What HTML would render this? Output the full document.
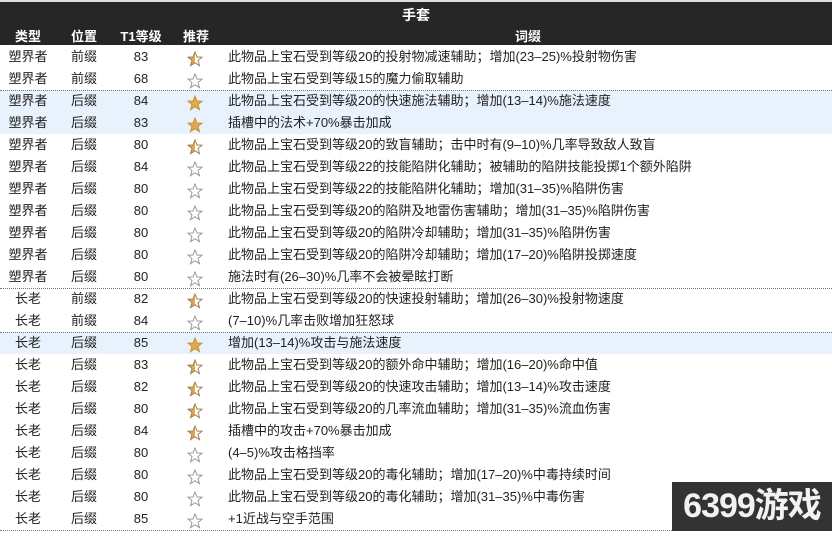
<!DOCTYPE html>
<html><head><meta charset="utf-8"><style>
*{margin:0;padding:0;box-sizing:border-box}
body{width:832px;height:531px;overflow:hidden;background:#fff;font-family:"Liberation Sans","Noto Sans CJK SC",sans-serif;font-size:13px;color:#222;position:relative}
.hd{position:absolute;left:0;top:2px;width:832px;height:43px;background:#262626;color:#fff;font-weight:bold}
.hd div{position:absolute;text-align:center}
.row{position:absolute;left:0;width:832px;height:22px;line-height:22px}
.row.b{background:#e8f2fc}
.row span{position:absolute;top:0}
.c1{left:0;width:56px;text-align:center}
.c2{left:56px;width:56px;text-align:center}
.c3{left:112px;width:58px;text-align:center}
.c4{left:187px;top:5px!important;width:16px;height:16px}
.c5{left:228px;white-space:nowrap}
.sep{position:absolute;left:0;width:832px;border-top:1px dotted #777}
.wm{position:absolute;left:672px;top:482px;width:160px;height:49px;background:#333;color:#f2f2f2;font-size:34px;font-weight:bold;line-height:49px;text-align:center;letter-spacing:-1px}
</style></head><body>
<div style="position:absolute;left:0;top:0;width:832px;height:2px;background:#ddd"></div>
<div class="hd">
<div style="left:0;width:832px;top:3px;font-size:14px">手套</div>
<div style="left:0;width:56px;top:24px">类型</div>
<div style="left:56px;width:56px;top:24px">位置</div>
<div style="left:112px;width:58px;top:24px">T1等级</div>
<div style="left:170px;width:52px;top:24px">推荐</div>
<div style="left:228px;width:600px;top:24px">词缀</div>
</div>
<svg width="0" height="0" style="position:absolute"><defs>
<linearGradient id="h"><stop offset="50%" stop-color="#e0a850"/><stop offset="50%" stop-color="#fff"/></linearGradient>
</defs></svg>
<div id="t"></div>
<div class="wm">6399游戏</div>
<script>
var R=[
["塑界者","前缀","83",1,"此物品上宝石受到等级20的投射物减速辅助；增加(23–25)%投射物伤害"],
["塑界者","前缀","68",0,"此物品上宝石受到等级15的魔力偷取辅助"],
["塑界者","后缀","84",2,"此物品上宝石受到等级20的快速施法辅助；增加(13–14)%施法速度"],
["塑界者","后缀","83",2,"插槽中的法术+70%暴击加成"],
["塑界者","后缀","80",1,"此物品上宝石受到等级20的致盲辅助；击中时有(9–10)%几率导致敌人致盲"],
["塑界者","后缀","84",0,"此物品上宝石受到等级22的技能陷阱化辅助；被辅助的陷阱技能投掷1个额外陷阱"],
["塑界者","后缀","80",0,"此物品上宝石受到等级22的技能陷阱化辅助；增加(31–35)%陷阱伤害"],
["塑界者","后缀","80",0,"此物品上宝石受到等级20的陷阱及地雷伤害辅助；增加(31–35)%陷阱伤害"],
["塑界者","后缀","80",0,"此物品上宝石受到等级20的陷阱冷却辅助；增加(31–35)%陷阱伤害"],
["塑界者","后缀","80",0,"此物品上宝石受到等级20的陷阱冷却辅助；增加(17–20)%陷阱投掷速度"],
["塑界者","后缀","80",0,"施法时有(26–30)%几率不会被晕眩打断"],
["长老","前缀","82",1,"此物品上宝石受到等级20的快速投射辅助；增加(26–30)%投射物速度"],
["长老","前缀","84",0,"(7–10)%几率击败增加狂怒球"],
["长老","后缀","85",2,"增加(13–14)%攻击与施法速度"],
["长老","后缀","83",1,"此物品上宝石受到等级20的额外命中辅助；增加(16–20)%命中值"],
["长老","后缀","82",1,"此物品上宝石受到等级20的快速攻击辅助；增加(13–14)%攻击速度"],
["长老","后缀","80",1,"此物品上宝石受到等级20的几率流血辅助；增加(31–35)%流血伤害"],
["长老","后缀","84",1,"插槽中的攻击+70%暴击加成"],
["长老","后缀","80",0,"(4–5)%攻击格挡率"],
["长老","后缀","80",0,"此物品上宝石受到等级20的毒化辅助；增加(17–20)%中毒持续时间"],
["长老","后缀","80",0,"此物品上宝石受到等级20的毒化辅助；增加(31–35)%中毒伤害"],
["长老","后缀","85",0,"+1近战与空手范围"]];
var p="M8 1 L10 6 L15 6.2 L11 9.5 L12.5 14.7 L8 11.7 L3.5 14.7 L5 9.5 L1 6.2 L6 6 Z";
var h="";
R.forEach(function(r,i){
var y=46+i*22;var b=(i==2||i==3||i==13);
var f=r[3]==2?'fill="#e0a850" stroke="#c89038"':r[3]==1?'fill="url(#h)" stroke="#a08050"':'fill="#fff" stroke="#999"';
var tp=(i==10||i==12)?(i>=11?'':''):'';
h+='<div class="row'+(b?' b':'')+'" style="top:'+y+'px"><span class="c1">'+r[0]+'</span><span class="c2">'+r[1]+'</span><span class="c3">'+r[2]+'</span><span class="c4"><svg width="16" height="16" viewBox="0 0 16 16"><path d="'+p+'" '+f+' stroke-width="1"/></svg></span><span class="c5">'+r[4]+'</span></div>';
});
[90,288,332,530].forEach(function(y){h+='<div class="sep" style="top:'+y+'px"></div>'});
document.getElementById('t').innerHTML=h;
</script>
</body></html>
